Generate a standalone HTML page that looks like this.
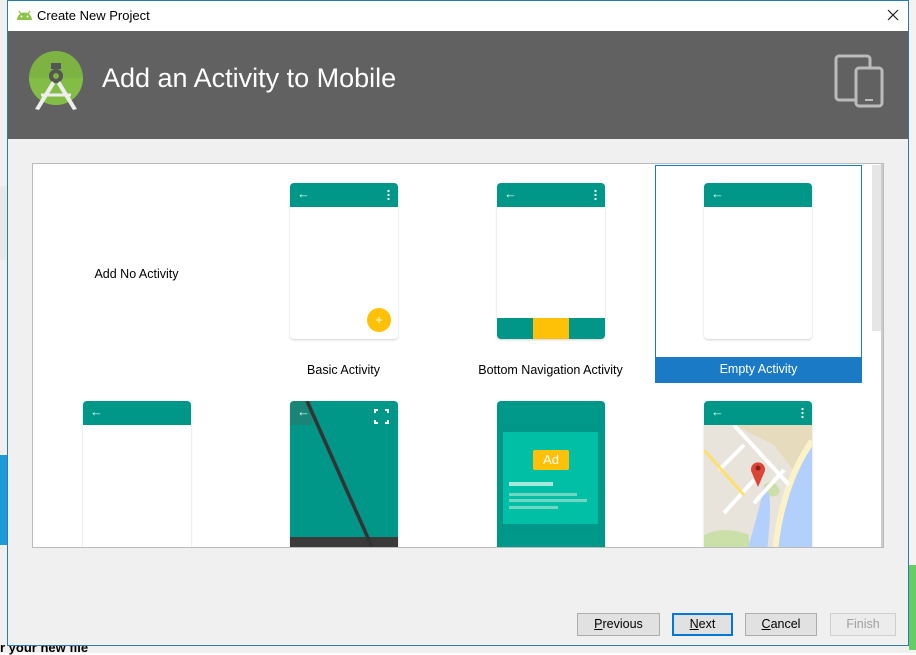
<!DOCTYPE html>
<html><head><meta charset="utf-8"><style>
*{margin:0;padding:0;box-sizing:border-box}
body{width:916px;height:653px;position:relative;overflow:hidden;background:#fff;font-family:"Liberation Sans",sans-serif;font-size:12px;color:#000}
.a{position:absolute}
.card{position:absolute;width:108px;background:#fff;border-radius:4px;box-shadow:0 1px 2px rgba(0,0,0,.18);overflow:hidden}
.bar{position:absolute;left:0;top:0;width:100%;height:24px;background:#009688}
.arr{position:absolute;left:7px;top:4px;color:#cfe;font-size:13px;line-height:14px}
.dots{position:absolute;right:8px;top:6px;width:3px;height:12px;background:radial-gradient(circle,#fff 1px,transparent 1.3px) 0 0/3px 4px}
.lbl{position:absolute;width:207px;text-align:center;font-size:12.5px}
.btn{position:absolute;top:613px;height:23px;background:#e1e1e1;border:1px solid #adadad;text-align:center;line-height:21px;font-size:12.5px}
.clip{position:absolute;left:0;top:0;width:916px;height:653px;clip-path:inset(164px 33px 106px 33px)}
</style></head><body>
<div class="a" style="left:0;top:0;width:7px;height:653px;background:#f0f0f0"></div>
<div class="a" style="left:0;top:455px;width:7px;height:90px;background:#1e9bd7"></div>
<div class="a" style="left:0;top:186px;width:7px;height:74px;background:#e8e8e8"></div>
<div class="a" style="left:0;top:645px;width:916px;height:8px;background:#f0f0f0"></div>
<div class="a" style="left:0;top:640px;font-weight:bold;font-size:13px">r your new file</div>
<div class="a" style="left:909px;top:0;width:7px;height:653px;background:#f3f3f3"></div>
<div class="a" style="left:909px;top:565px;width:7px;height:85px;background:#6c6"></div>
<div class="a" style="left:7px;top:0;width:902px;height:646px;background:#f0f0f0;border:1px solid #2b7bb0"></div>
<div class="a" style="left:8px;top:1px;width:900px;height:30px;background:#fff"></div>
<svg class="a" style="left:16px;top:10px" width="17" height="10" viewBox="0 0 17 10"><path d="M1 10a7.5 7.5 0 0 1 15 0z" fill="#8bc34a"/><path d="M3 1l2 3M14 1l-2 3" stroke="#8bc34a" stroke-width="1.2"/><circle cx="5.5" cy="6.5" r="1" fill="#fff"/><circle cx="11.5" cy="6.5" r="1" fill="#fff"/></svg>
<div class="a" style="left:37px;top:8px;font-size:13px">Create New Project</div>
<svg class="a" style="left:887px;top:9px" width="12" height="12" viewBox="0 0 12 12"><path d="M1 1l10 10M11 1L1 11" stroke="#222" stroke-width="1.2"/></svg>
<div class="a" style="left:8px;top:31px;width:900px;height:108px;background:#616161"></div>
<svg class="a" style="left:29px;top:51px" width="54" height="60" viewBox="0 0 54 60"><circle cx="27" cy="27" r="27" fill="#7cb342"/><path d="M0 27a27 27 0 0 0 54 0z" fill="#8bc34a" opacity=".6"/><rect x="22" y="12" width="10" height="6" fill="#555"/><circle cx="27" cy="25" r="7" fill="#555"/><circle cx="27" cy="25" r="3" fill="#7cb342"/><path d="M23 30L6 58l4 1 16-26zM31 30l17 28-4 1-16-26z" fill="#eee"/><path d="M12 44h30" stroke="#eee" stroke-width="3"/></svg>
<div class="a" style="left:102px;top:63px;font-size:27px;color:#fff">Add an Activity to Mobile</div>
<svg class="a" style="left:834px;top:54px" width="52" height="54" viewBox="0 0 52 54"><rect x="2" y="2" width="34" height="44" rx="3" fill="none" stroke="#bbb" stroke-width="3"/><rect x="22" y="14" width="26" height="38" rx="3" fill="#616161" stroke="#bbb" stroke-width="3"/><rect x="31" y="45" width="8" height="2" fill="#bbb"/></svg>
<div class="a" style="left:32px;top:163px;width:852px;height:385px;background:#fff;border:1px solid #bbb;overflow:hidden">
  <div class="a" style="left:839px;top:1px;width:11px;height:166px;background:#e6e6e6"></div>
  <div class="a" style="left:848px;top:0;width:3px;height:385px;background:#ccc"></div>
</div>
<div class="a" style="left:655px;top:165px;width:207px;height:218px;border:1px solid #1b7ac6"></div>
<div class="a" style="left:655px;top:357px;width:207px;height:26px;background:#1b7ac6"></div>
<div class="lbl" style="left:33px;top:267px">Add No Activity</div>
<div class="lbl" style="left:240px;top:363px">Basic Activity</div>
<div class="lbl" style="left:447px;top:363px">Bottom Navigation Activity</div>
<div class="lbl" style="left:655px;top:362px;color:#fff">Empty Activity</div>
<div class="clip">
<div class="card" style="left:290px;top:183px;height:156px"><div class="bar"><span class="arr">←</span><span class="dots"></span></div>
<div class="a" style="left:77px;top:125px;width:24px;height:24px;border-radius:50%;background:#ffc107;color:#fff;text-align:center;line-height:24px;font-size:12px">+</div></div>
<div class="card" style="left:497px;top:183px;height:156px"><div class="bar"><span class="arr">←</span><span class="dots"></span></div>
<div class="a" style="left:0;top:135px;width:108px;height:21px;background:#009688"></div><div class="a" style="left:36px;top:135px;width:36px;height:21px;background:#ffc107"></div></div>
<div class="card" style="left:704px;top:183px;height:156px"><div class="bar"><span class="arr">←</span></div></div>
<div class="card" style="left:83px;top:401px;height:160px"><div class="bar"><span class="arr">←</span></div></div>
<div class="card" style="left:290px;top:401px;height:160px;background:#009688">
<div class="a" style="left:0;top:0;width:22px;height:24px;background:#1a8577"></div><span class="arr">←</span>
<div class="a" style="left:84px;top:8px;width:15px;height:15px;border:2px solid #fff"></div>
<div class="a" style="left:88px;top:6px;width:7px;height:19px;background:#009688"></div><div class="a" style="left:82px;top:12px;width:19px;height:7px;background:#009688"></div>
<div class="a" style="left:0;top:136px;width:108px;height:24px;background:#3a3a3a"></div>
<svg class="a" style="left:0;top:0" width="108" height="160"><path d="M17 0L82 146" stroke="#333" stroke-width="3.5"/></svg></div>
<div class="card" style="left:497px;top:401px;height:160px;background:#009688">
<div class="a" style="left:6px;top:4px;width:95px;height:20px;background:#00998a"></div>
<div class="a" style="left:6px;top:31px;width:95px;height:92px;background:#00bfa5"></div>
<div class="a" style="left:36px;top:49px;width:36px;height:20px;background:#ffc107;border-radius:2px;color:#fff;text-align:center;line-height:20px;font-size:13px">Ad</div>
<div class="a" style="left:12px;top:81px;width:44px;height:4px;background:#a6e8dc"></div>
<div class="a" style="left:12px;top:92px;width:68px;height:3px;background:#6fd6c4"></div>
<div class="a" style="left:12px;top:98px;width:78px;height:3px;background:#6fd6c4"></div>
<div class="a" style="left:12px;top:105px;width:49px;height:3px;background:#6fd6c4"></div>
<div class="a" style="left:6px;top:130px;width:95px;height:30px;background:#00998a"></div></div>
<div class="card" style="left:704px;top:401px;height:160px">
<svg class="a" style="left:0;top:24px" width="108" height="136" viewBox="0 0 108 136"><rect width="108" height="136" fill="#e8e4dc"/><path d="M30 0H108V70L70 20z" fill="#e6dcbd"/><path d="M60 60q10-8 16 6q-4 10-16 2z" fill="#cbe0a8"/><path d="M0 110q20-10 45 0v26H0z" fill="#cbe0a8"/><path d="M40 136q15-50 20-74q6 0 6 20q0 20-4 54z" fill="#b3cffc"/><path d="M66 136q10-74 42-114v114z" fill="#b3cffc"/><path d="M70 136q6-74 38-120" stroke="#fbf3c7" stroke-width="6" fill="none"/><path d="M30 0l55 60M40 20L15 45M50 55L20 88M80 45L50 78" stroke="#fff" stroke-width="4"/><path d="M0 25l40 45" stroke="#fde06c" stroke-width="3"/></svg>
<div class="bar"><span class="arr">←</span><span class="dots"></span></div>
<svg class="a" style="left:46px;top:60px" width="16" height="26" viewBox="0 0 16 26"><path d="M8 26L2 12A7 7 0 1 1 14 12z" fill="#db4437"/><circle cx="8" cy="7" r="2.5" fill="#8b1f18"/></svg></div>
</div>
<div class="btn" style="left:577px;width:83px"><u>P</u>revious</div>
<div class="btn" style="left:672px;width:61px;border:2px solid #0078d7;line-height:19px"><u>N</u>ext</div>
<div class="btn" style="left:745px;width:72px"><u>C</u>ancel</div>
<div class="btn" style="left:830px;width:66px;background:#ececec;border-color:#cfcfcf;color:#a0a0a0">Finish</div>
</body></html>
